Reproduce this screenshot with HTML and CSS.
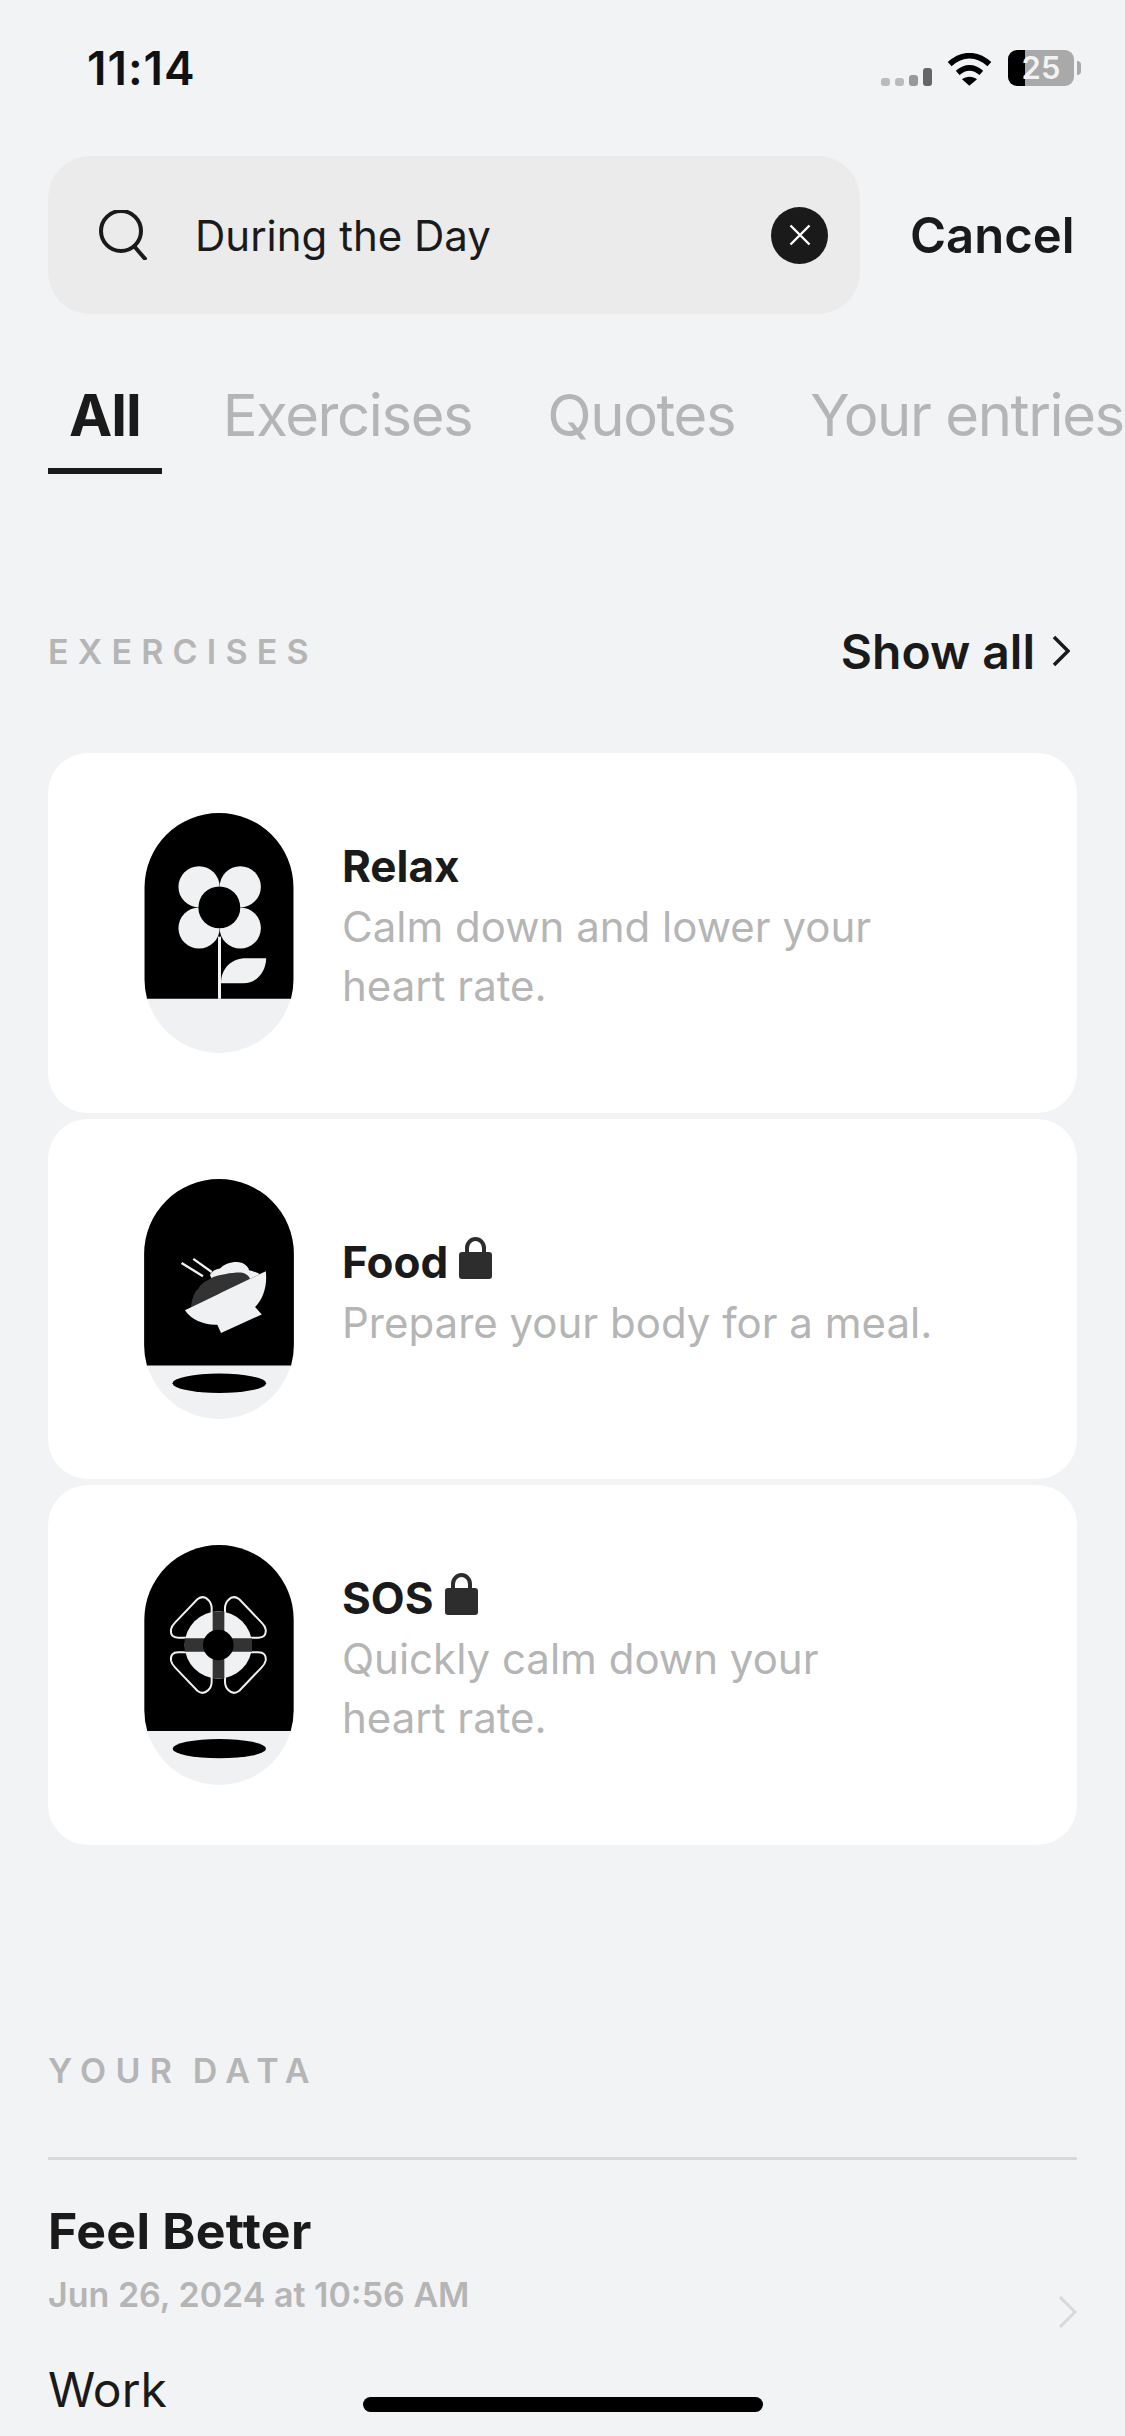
FILE: index.html
```html
<!DOCTYPE html>
<html lang="en">

<head>
    <meta charset="UTF-8" />
    <meta name="viewport" content="width=device-width, initial-scale=1.0" />
    <title>Search</title>
    <link rel="stylesheet" href="styles.css">
</head>

<body>
    <div class="status-bar">
        <span class="time">11:14</span>
        <div class="status-icons">
            <div class="signal">
                <i class="dot dot-1"></i><i class="dot dot-2"></i><i class="dot dot-3"></i><i class="dot dot-4"></i>
            </div>
            <svg class="wifi" viewBox="295 67 135 98">
                <path d="M303 100C340 66 385 66 422 100" fill="none" stroke="#000" stroke-width="17" />
                <path d="M327 126C350 106 375 106 398 126" fill="none" stroke="#000" stroke-width="17" />
                <path d="M340 145C352 135 373 135 385 145L362 165Z" fill="#000" />
            </svg>
            <div class="battery"><span>25</span></div>
            <i class="battery-nub"></i>
        </div>
    </div>

    <div class="search-row">
        <div class="search-box">
            <svg class="search-icon" viewBox="0 0 48 50">
                <circle cx="22" cy="21" r="20" fill="none" stroke="#1a1a1a" stroke-width="4" />
                <path d="M35 36L47 50" fill="none" stroke="#1a1a1a" stroke-width="4" />
            </svg>
            <span class="search-text">During the Day</span>
            <div class="clear-btn">
                <svg viewBox="0 0 22 22" width="22" height="22">
                    <path d="M1.500 1.500L20.500 20.500M20.500 1.500L1.500 20.500" stroke="#fff" stroke-width="2.4" fill="none" />
                </svg>
            </div>
        </div>
        <span class="cancel">Cancel</span>
    </div>

    <div class="tabs">
        <span class="tab tab-active">All</span>
        <span class="tab">Exercises</span>
        <span class="tab">Quotes</span>
        <span class="tab">Your entries</span>
    </div>

    <div class="section-head">
        <span class="section-label">EXERCISES</span>
        <span class="show-all">Show all
            <svg viewBox="0 0 18 32" width="18" height="32">
                <path d="M2 2L16 16L2 30" fill="none" stroke="#1a1a1a" stroke-width="3.5" />
            </svg>
        </span>
    </div>

    <div class="cards">
        <div class="card">
            <svg class="capsule" viewBox="73 68 448 722">
                <rect x="73" y="68" width="448" height="722" rx="224" fill="#f0f1f2" />
                <path d="M73 292A224 224 0 0 1 521 292V566A224 224 0 0 1 513.5 627H80.5A224 224 0 0 1 73 566Z" fill="#000" />
                <circle cx="237" cy="290" r="62" fill="#f0f1f2" />
                <circle cx="361" cy="290" r="62" fill="#f0f1f2" />
                <circle cx="237" cy="414" r="62" fill="#f0f1f2" />
                <circle cx="361" cy="414" r="62" fill="#f0f1f2" />
                <circle cx="298" cy="352" r="63" fill="#000" />
                <rect x="294" y="440" width="9" height="187" fill="#f0f1f2" />
                <path d="M303 580C303 535 335 505 378 505H439C438 545 412 580 370 580Z" fill="#f0f1f2" />
            </svg>
            <div class="card-text">
                <div class="card-title">Relax</div>
                <div class="card-desc">Calm down and lower your<br>heart rate.</div>
            </div>
        </div>
        <div class="card">
            <svg class="capsule" viewBox="73 57 448 718">
                <rect x="73" y="57" width="448" height="718" rx="224" fill="#f0f1f2" />
                <path d="M73 281A224 224 0 0 1 521 281V551A224 224 0 0 1 512.7 615H81.3A224 224 0 0 1 73 551Z" fill="#000" />
                <path d="M185 308L249 348M220 296L275 335" stroke="#f0f1f2" stroke-width="7" fill="none" />
                <path d="M270 345C272 335 285 328 300 325C310 312 330 305 350 305C370 305 385 318 387 330C400 332 415 340 420 342L437 333L300 400Z" fill="#f0f1f2" />
                <path d="M213 441C215 420 222 395 235 385C245 365 265 360 280 350C300 345 315 340 350 337C365 335 385 340 390 356Z" fill="#333" />
                <path d="M195 450L437 333C442 375 430 415 405 440L425 462L303 518L292 493C255 495 215 480 195 450Z" fill="#f0f1f2" />
                <ellipse cx="298" cy="668" rx="140" ry="29" fill="#000" />
            </svg>
            <div class="card-text">
                <div class="card-title">Food
                    <svg class="lock" viewBox="0 0 33 42">
                        <path d="M8 17V11C8 6 12 2 16.500 2S25 6 25 11V17" fill="none" stroke="#2d2d2d" stroke-width="4" />
                        <rect x="0" y="15" width="33" height="27" rx="3" fill="#2d2d2d" />
                    </svg>
                </div>
                <div class="card-desc">Prepare your body for a meal.</div>
            </div>
        </div>
        <div class="card">
            <svg class="capsule" viewBox="73 45 448 720">
                <rect x="73" y="45" width="448" height="720" rx="224" fill="#f0f1f2" />
                <path d="M73 269A224 224 0 0 1 521 269V541A224 224 0 0 1 512.200 603H81.800A224 224 0 0 1 73 541Z" fill="#000" />
                <g fill="none" stroke="#f0f1f2" stroke-width="6">
                    <path d="M232 208Q250 194 265 210Q275 220 275 235V305Q275 323 255 323H175Q150 323 153 298Q155 288 165 278Z" />
                    <path d="M232 208Q250 194 265 210Q275 220 275 235V305Q275 323 255 323H175Q150 323 153 298Q155 288 165 278Z" transform="translate(590 0) scale(-1 1)" />
                    <path d="M232 208Q250 194 265 210Q275 220 275 235V305Q275 323 255 323H175Q150 323 153 298Q155 288 165 278Z" transform="translate(0 690) scale(1 -1)" />
                    <path d="M232 208Q250 194 265 210Q275 220 275 235V305Q275 323 255 323H175Q150 323 153 298Q155 288 165 278Z" transform="translate(590 690) scale(-1 -1)" />
                </g>
                <circle cx="295" cy="345" r="101" fill="#f0f1f2" />
                <path d="M278 244.500H313V325H396V365H313V445.500H278V365H194V325H278Z" fill="#333" />
                <circle cx="295" cy="345" r="46" fill="#000" />
                <ellipse cx="298" cy="656" rx="140" ry="29" fill="#000" />
            </svg>
            <div class="card-text">
                <div class="card-title">SOS
                    <svg class="lock" viewBox="0 0 33 42">
                        <path d="M8 17V11C8 6 12 2 16.500 2S25 6 25 11V17" fill="none" stroke="#2d2d2d" stroke-width="4" />
                        <rect x="0" y="15" width="33" height="27" rx="3" fill="#2d2d2d" />
                    </svg>
                </div>
                <div class="card-desc">Quickly calm down your<br>heart rate.</div>
            </div>
        </div>
    </div>

    <div class="data-section">
        <div class="section-label">YOUR DATA</div>
        <div class="data-item">
            <div class="data-title">Feel Better</div>
            <div class="data-date">Jun 26, 2024 at 10:56 AM</div>
            <div class="data-note">Work</div>
            <svg class="data-chevron" viewBox="0 0 19 32">
                <path d="M2 1L17 16L2 31" fill="none" stroke="#d8d9da" stroke-width="3" />
            </svg>
        </div>
    </div>

    <div class="home-indicator"></div>
</body>

</html>
```

FILE: styles.css
```css
* {
    box-sizing: border-box;
}

html,
body {
    height: 2436px;
}

body {
    margin: 0;
    overflow: hidden;
    position: relative;
    background-color: #f2f3f5;
    color: #1a1a1a;
    font-family: Inter, "Liberation Sans", sans-serif;
}

.status-bar {
    display: flex;
    justify-content: space-between;
    align-items: center;
    height: 136px;
    padding: 0 44px 0 87px;
}

.time {
    font-size: 46px;
    font-weight: 600;
    letter-spacing: 1px;
    color: #111;
}

.status-icons {
    display: flex;
    align-items: center;
}

.signal {
    display: flex;
    align-items: flex-end;
    gap: 5px;
    margin-top: 18px;
    margin-right: 15px;
}

.dot {
    display: block;
    width: 9px;
    height: 8px;
    border-radius: 3px;
    background-color: #bbb;
}

.dot-3 {
    background-color: #999;
    height: 11px;
}

.dot-4 {
    background-color: #666;
    height: 18px;
}

.wifi {
    width: 45px;
    height: 33px;
    margin-top: 2px;
    margin-right: 16px;
}

.battery {
    width: 66px;
    height: 36px;
    border-radius: 9px;
    background: linear-gradient(90deg, #000 26%, #a9a9a9 26%);
    color: #f2f3f5;
    font-size: 31px;
    font-weight: 600;
    line-height: 36px;
    text-align: center;
}

.battery-nub {
    display: block;
    width: 4px;
    height: 14px;
    margin-left: 3px;
    border-radius: 0 4px 4px 0;
    background-color: #a9a9a9;
}

.search-row {
    display: flex;
    align-items: center;
    margin-top: 20px;
    padding: 0 48px;
}

.search-box {
    display: flex;
    align-items: center;
    width: 812px;
    height: 158px;
    padding: 0 32px 0 51px;
    border-radius: 42px;
    background-color: #ebebeb;
}

.search-icon {
    width: 48px;
    height: 50px;
    margin-right: 48px;
}

.search-text {
    flex: 1;
    font-size: 42px;
}

.clear-btn {
    display: flex;
    justify-content: center;
    align-items: center;
    width: 57px;
    height: 57px;
    border-radius: 50%;
    background-color: #1a1a1a;
}

.cancel {
    margin-left: 50px;
    font-size: 49px;
    font-weight: 600;
}

.tabs {
    display: flex;
    gap: 33px;
    margin-top: 64px;
    padding-left: 48px;
    white-space: nowrap;
}

.tab {
    height: 96px;
    padding: 0 21px;
    font-size: 58px;
    letter-spacing: -1.400px;
    line-height: 74px;
    color: #b5b5b5;
}

.tab-active {
    margin-right: 7px;
    border-bottom: 6px solid #1a1a1a;
    color: #1a1a1a;
    font-weight: 700;
    letter-spacing: -1px;
}

.section-head {
    display: flex;
    justify-content: space-between;
    align-items: center;
    height: 60px;
    margin-top: 147px;
    padding: 0 55px 0 48px;
}

.section-label {
    font-size: 34px;
    font-weight: 600;
    letter-spacing: 9.200px;
    color: #b5b5b5;
    white-space: pre;
}

.show-all {
    display: flex;
    align-items: center;
    gap: 17px;
    font-size: 48px;
    font-weight: 600;
}

.cards {
    display: flex;
    flex-direction: column;
    gap: 6px;
    margin-top: 72px;
    padding: 0 48px;
}

.card {
    display: flex;
    align-items: center;
    height: 360px;
    padding-left: 96px;
    border-radius: 40px;
    background-color: #fff;
}

.capsule {
    flex-shrink: 0;
    width: 150px;
    height: 240px;
}

.card-text {
    margin-left: 48px;
    padding-bottom: 16px;
}

.card-title {
    display: flex;
    align-items: center;
    gap: 11px;
    font-size: 44px;
    font-weight: 700;
    line-height: 62px;
}

.lock {
    width: 33px;
    height: 42px;
    margin-bottom: 8px;
}

.card-desc {
    font-size: 42px;
    line-height: 59px;
    color: #b5b5b5;
}

.data-section {
    margin-top: 196px;
    padding: 0 48px;
}

.data-section .section-label {
    line-height: 60px;
    word-spacing: -6px;
}

.data-item {
    position: relative;
    margin-top: 56px;
    padding-top: 41px;
    border-top: 3px solid #d8d9da;
}

.data-title {
    font-size: 50px;
    font-weight: 700;
    letter-spacing: 0.300px;
    line-height: 60px;
}

.data-date {
    margin-top: 6px;
    font-size: 34px;
    font-weight: 600;
    line-height: 56px;
    color: #b5b5b5;
}

.data-note {
    margin-top: 37px;
    font-size: 48px;
    line-height: 60px;
}

.data-chevron {
    position: absolute;
    top: 136px;
    right: 0;
    width: 19px;
    height: 32px;
}

.home-indicator {
    position: absolute;
    left: 363px;
    top: 2397px;
    width: 400px;
    height: 15px;
    border-radius: 8px;
    background-color: #000;
}
```
